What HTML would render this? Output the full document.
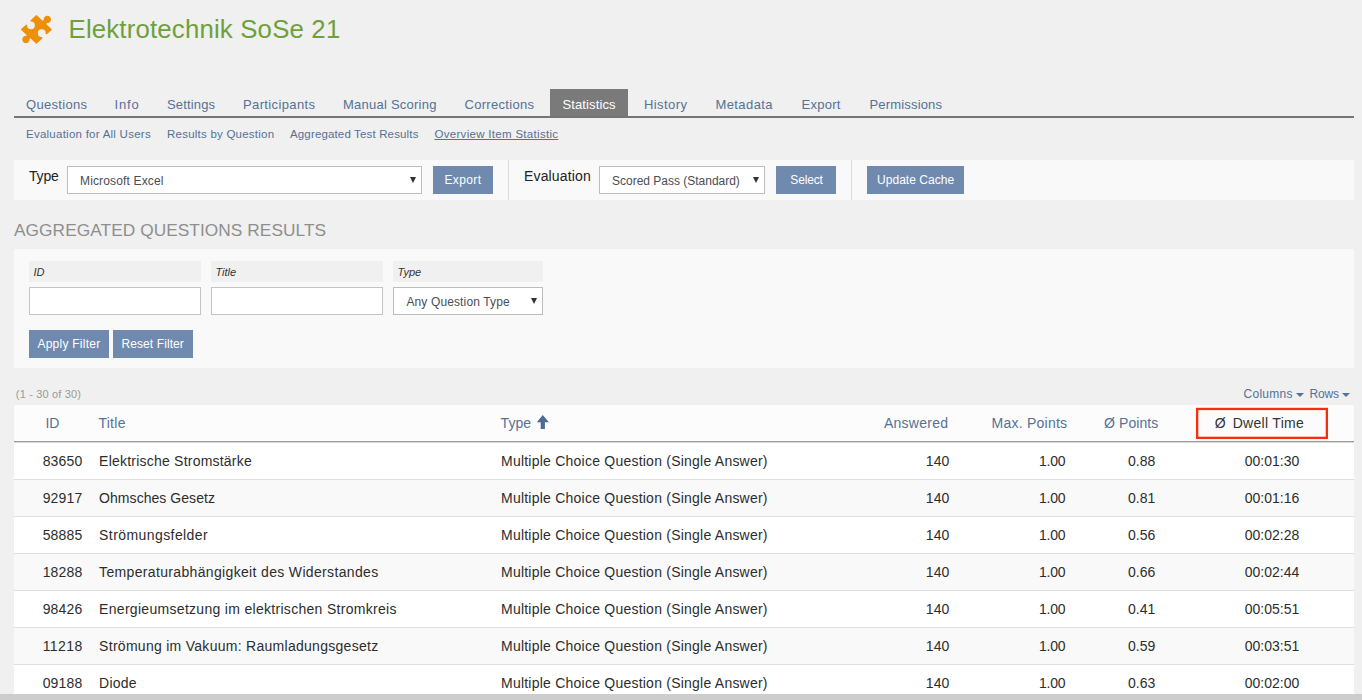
<!DOCTYPE html>
<html lang="en"><head><meta charset="utf-8"><title>Elektrotechnik SoSe 21</title>
<style>
*{box-sizing:border-box}
html,body{margin:0;padding:0}
body{width:1362px;height:700px;overflow:hidden;background:#f0f0f0;position:relative;
 font-family:"Liberation Sans",sans-serif;font-size:14px;color:#2d2d2d;line-height:1}
a{color:#557196;text-decoration:none}
#hdr{position:absolute;left:0;top:0;width:1362px;height:60px}
#hdr svg{position:absolute;left:18px;top:13px}
#hdr h1{position:absolute;left:68.5px;top:17px;margin:0;font-weight:normal;font-size:25.8px;color:#6ea03c;white-space:nowrap}
#tabs{position:absolute;left:14px;top:89px;width:1340px;height:29px;margin:0;padding:0;list-style:none;border-bottom:2px solid #757575}
#tabs li{position:absolute;top:0;height:27px;font-size:13px;white-space:nowrap}
#tabs li a{display:block;height:27px;padding:9px 0 0 12px}
#tabs li.act{background:#7a7a7a}
#tabs li.act a{color:#fff}
#subtabs{position:absolute;left:14px;top:118px;width:1340px;height:32px;margin:0;padding:0;list-style:none}
#subtabs li{position:absolute;top:11px;font-size:11.5px;white-space:nowrap}
#subtabs li.act a{text-decoration:underline}
#toolbar{position:absolute;left:14px;top:160px;width:1340px;height:40px;background:#f9f9f9}
#toolbar label{position:absolute;font-size:14px;color:#222;top:8.5px;white-space:nowrap}
.sel{position:absolute;height:28px;background:#fff;border:1px solid #bdbdbd;font-size:12px;color:#4a4d55;white-space:nowrap;padding:7.5px 0 0 12px}
.sel i{position:absolute;right:5px;top:10px;width:0;height:0;border-left:3.5px solid transparent;border-right:3.5px solid transparent;border-top:6.5px solid #333}
.btn{position:absolute;height:28px;background:#6f8aae;color:#fff;font-size:12px;text-align:left;padding:0;white-space:nowrap;border:0;font-family:inherit;line-height:1;margin:0}
.vsep{position:absolute;top:0;width:1px;height:40px;background:#dcdcdc}
h3{position:absolute;left:14px;top:221.5px;margin:0;font-weight:normal;font-size:17.3px;color:#8e8e8e;white-space:nowrap}
#filter{position:absolute;left:14px;top:249px;width:1340px;height:119px;background:#f9f9f9}
#filter .lab{position:absolute;top:12px;height:21px;background:#f0f0f0;font-size:11px;font-style:italic;color:#333;padding:6px 0 0 4.5px}
#filter .inp{position:absolute;top:38px;height:28px;background:#fff;border:1px solid #c4c4c4}
#filter .sel{top:38px;height:28px;padding-top:7.5px}
#filter .btn{top:81px}
#nav{position:absolute;left:14px;top:380px;width:1340px;height:25px;font-size:11px;color:#999}
#nav .cnt{position:absolute;left:1.8px;top:8.5px;white-space:nowrap}
#nav .r{position:absolute;top:8px;font-size:12px;white-space:nowrap}
#nav .r i{display:inline-block;width:0;height:0;border-left:4px solid transparent;border-right:4px solid transparent;border-top:4.5px solid #557196;margin-left:3.5px;vertical-align:1.5px;letter-spacing:0}
table{position:absolute;left:14px;top:405px;width:1340px;border-collapse:separate;border-spacing:0;table-layout:fixed;font-size:14px}
th{height:37px;background:#fcfcfc;font-weight:normal;color:#557196;border-bottom:1px solid #9c9c9c;padding:0;white-space:nowrap;vertical-align:middle;text-align:left}
td{height:37px;border-bottom:1px solid #dedede;padding:0;white-space:nowrap;vertical-align:middle;text-align:left;background:#fff}
tr.odd td{background:#f9f9f9}
tbody tr:first-child td{height:38px;border-top:1px solid #dadada}
td span,th span,th a{display:inline-block}
#red{position:absolute;left:1194px;top:406px;width:136px;height:35px;overflow:visible}
#bar{position:absolute;left:0;top:694px;width:1362px;height:6px;background:#cdcdcd}
.up{position:absolute;left:523px;top:10px}
.mc{letter-spacing:0.23px}
</style></head>
<body>
<div id="hdr">
<svg width="36" height="32" viewBox="-18 -16 36 32"><g transform="translate(0.4,0.45) rotate(45)"><path fill="#ee9007" stroke="#ee9007" stroke-width="1.2" stroke-linejoin="round" d="M-9.65 -9.65 L-1.00 -9.99 L-1.09 -12.27 A3.10 3.10 0 1 1 2.51 -12.41 L2.60 -10.14 L10.45 -10.45 L10.20 -4.20 L9.67 -4.22 A4.50 4.50 0 1 0 9.41 2.18 L9.95 2.20 L9.65 9.65 L1.30 9.98 L1.37 11.86 A3.10 3.10 0 1 1 -2.22 12.00 L-2.30 10.13 L-10.45 10.45 L-10.20 4.10 L-9.96 4.11 A4.50 4.50 0 1 0 -9.71 -2.29 L-9.94 -2.30 L-9.65 -9.65 Z"/></g></svg>
<h1 style="letter-spacing:0.17px">Elektrotechnik SoSe 21</h1>
</div>
<ul id="tabs">
<li style="left:0.0px;width:85.0px"><a style="padding-left:12.0px;letter-spacing:0.31px">Questions</a></li>
<li style="left:88.6px;width:48.1px"><a style="padding-left:12.0px;letter-spacing:0.80px">Info</a></li>
<li style="left:141.0px;width:72.0px"><a style="padding-left:12.0px;letter-spacing:0.15px">Settings</a></li>
<li style="left:217.0px;width:96.0px"><a style="padding-left:12.0px;letter-spacing:0.37px">Participants</a></li>
<li style="left:317.0px;width:117.5px"><a style="padding-left:12.0px;letter-spacing:0.24px">Manual Scoring</a></li>
<li style="left:438.5px;width:93.5px"><a style="padding-left:12.0px;letter-spacing:0.30px">Corrections</a></li>
<li class="act" style="left:536.0px;width:78.0px"><a style="padding-left:12.5px;letter-spacing:0.11px">Statistics</a></li>
<li style="left:618.0px;width:67.0px"><a style="padding-left:12.0px;letter-spacing:0.42px">History</a></li>
<li style="left:689.5px;width:81.0px"><a style="padding-left:12.0px;letter-spacing:0.40px">Metadata</a></li>
<li style="left:775.5px;width:63.0px"><a style="padding-left:12.0px;letter-spacing:0.28px">Export</a></li>
<li style="left:843.5px;width:96.5px"><a style="padding-left:12.0px;letter-spacing:0.17px">Permissions</a></li>
</ul>
<ul id="subtabs">
<li style="left:12.0px"><a style="letter-spacing:0.25px">Evaluation for All Users</a></li>
<li style="left:153.0px"><a style="letter-spacing:0.23px">Results by Question</a></li>
<li style="left:276.0px"><a style="letter-spacing:0.15px">Aggregated Test Results</a></li>
<li class="act" style="left:420.5px"><a style="letter-spacing:0.30px">Overview Item Statistic</a></li>
</ul>
<div id="toolbar">
<label style="left:15px;letter-spacing:-0.19px">Type</label>
<div class="sel" style="left:53px;top:6px;width:355px;letter-spacing:0.15px">Microsoft Excel<i></i></div>
<button class="btn" style="left:419px;width:60px;padding-left:11.5px;letter-spacing:0.36px;top:6px">Export</button>
<div class="vsep" style="left:494px"></div>
<label style="left:510px;letter-spacing:0.16px">Evaluation</label>
<div class="sel" style="left:585px;top:6px;width:166px;letter-spacing:-0.01px">Scored Pass (Standard)<i></i></div>
<button class="btn" style="left:762px;width:60px;padding-left:14.3px;letter-spacing:-0.15px;top:6px">Select</button>
<div class="vsep" style="left:837px"></div>
<button class="btn" style="left:853px;width:97px;padding-left:10.0px;letter-spacing:0.04px;top:6px">Update Cache</button>
</div>
<h3 style="letter-spacing:0.06px">AGGREGATED QUESTIONS RESULTS</h3>
<div id="filter">
<div class="lab" style="left:15px;width:172px">ID</div>
<div class="lab" style="left:197px;width:172px">Title</div>
<div class="lab" style="left:379px;width:150px">Type</div>
<div class="inp" style="left:15px;width:172px"></div>
<div class="inp" style="left:197px;width:172px"></div>
<div class="sel" style="left:379px;width:150px;padding-left:12.4px;letter-spacing:0.13px">Any Question Type<i></i></div>
<button class="btn" style="left:15px;width:80px;padding-left:8.4px;letter-spacing:0.25px;">Apply Filter</button>
<button class="btn" style="left:99px;width:80px;padding-left:8.5px;letter-spacing:0.09px;">Reset Filter</button>
</div>
<div id="nav"><span class="cnt" style="letter-spacing:0.17px">(1 - 30 of 30)</span>
<a class="r" style="left:1229.5px;letter-spacing:0.27px">Columns<i></i></a>
<a class="r" style="left:1295.5px;letter-spacing:-0.20px">Rows<i></i></a>
</div>
<table>
<colgroup><col style="width:85px"><col style="width:402px"><col style="width:360px"><col style="width:101px"><col style="width:119px"><col style="width:91px"><col style="width:182px"></colgroup>
<thead><tr>
<th><span style="margin-left:31.4px;letter-spacing:-0.10px">ID</span></th>
<th><a style="margin-left:-0.6px;letter-spacing:0.27px">Title</a></th>
<th style="position:relative"><a style="margin-left:-0.4px;letter-spacing:0.05px">Type</a><svg class="up" style="left:36px" width="12" height="14" viewBox="0 0 12 14"><path fill="#4c6a92" d="M5.8 0 L11.9 7.3 L7.9 7.3 L7.9 14 L3.7 14 L3.7 7.3 L-0.3 7.3 Z"/></svg></th>
<th><a style="margin-left:22.9px;letter-spacing:0.28px">Answered</a></th>
<th><a style="margin-left:29.5px;letter-spacing:0.24px">Max. Points</a></th>
<th><a style="margin-left:23.0px;letter-spacing:0.09px">Ø Points</a></th>
<th style="color:#333"><span style="margin-left:42.8px;letter-spacing:0.00px">Ø</span><span style="margin-left:7.0px;letter-spacing:0.30px">Dwell Time</span></th>
</tr></thead>
<tbody>
<tr><td><span style="margin-left:28.7px;letter-spacing:0.14px">83650</span></td><td><span style="margin-left:0.1px;letter-spacing:0.22px">Elektrische Stromstärke</span></td><td><span class="mc">Multiple Choice Question (Single Answer)</span></td><td><span style="margin-left:64.8px;letter-spacing:0.12px">140</span></td><td><span style="margin-left:77.0px;letter-spacing:-0.20px">1.00</span></td><td><span style="margin-left:47.0px;letter-spacing:0.02px">0.88</span></td><td><span style="margin-left:72.8px;letter-spacing:0.00px">00:01:30</span></td></tr>
<tr class="odd"><td><span style="margin-left:28.7px;letter-spacing:0.14px">92917</span></td><td><span style="margin-left:0.1px;letter-spacing:0.05px">Ohmsches Gesetz</span></td><td><span class="mc">Multiple Choice Question (Single Answer)</span></td><td><span style="margin-left:64.8px;letter-spacing:0.12px">140</span></td><td><span style="margin-left:77.0px;letter-spacing:-0.20px">1.00</span></td><td><span style="margin-left:47.0px;letter-spacing:0.02px">0.81</span></td><td><span style="margin-left:72.8px;letter-spacing:0.00px">00:01:16</span></td></tr>
<tr><td><span style="margin-left:28.7px;letter-spacing:0.14px">58885</span></td><td><span style="margin-left:0.1px;letter-spacing:0.42px">Strömungsfelder</span></td><td><span class="mc">Multiple Choice Question (Single Answer)</span></td><td><span style="margin-left:64.8px;letter-spacing:0.12px">140</span></td><td><span style="margin-left:77.0px;letter-spacing:-0.20px">1.00</span></td><td><span style="margin-left:47.0px;letter-spacing:0.02px">0.56</span></td><td><span style="margin-left:72.8px;letter-spacing:0.00px">00:02:28</span></td></tr>
<tr class="odd"><td><span style="margin-left:28.7px;letter-spacing:0.14px">18288</span></td><td><span style="margin-left:0.1px;letter-spacing:0.34px">Temperaturabhängigkeit des Widerstandes</span></td><td><span class="mc">Multiple Choice Question (Single Answer)</span></td><td><span style="margin-left:64.8px;letter-spacing:0.12px">140</span></td><td><span style="margin-left:77.0px;letter-spacing:-0.20px">1.00</span></td><td><span style="margin-left:47.0px;letter-spacing:0.02px">0.66</span></td><td><span style="margin-left:72.8px;letter-spacing:0.00px">00:02:44</span></td></tr>
<tr><td><span style="margin-left:28.7px;letter-spacing:0.14px">98426</span></td><td><span style="margin-left:0.1px;letter-spacing:0.30px">Energieumsetzung im elektrischen Stromkreis</span></td><td><span class="mc">Multiple Choice Question (Single Answer)</span></td><td><span style="margin-left:64.8px;letter-spacing:0.12px">140</span></td><td><span style="margin-left:77.0px;letter-spacing:-0.20px">1.00</span></td><td><span style="margin-left:47.0px;letter-spacing:0.02px">0.41</span></td><td><span style="margin-left:72.8px;letter-spacing:0.00px">00:05:51</span></td></tr>
<tr class="odd"><td><span style="margin-left:28.7px;letter-spacing:0.40px">11218</span></td><td><span style="margin-left:0.1px;letter-spacing:0.28px">Strömung im Vakuum: Raumladungsgesetz</span></td><td><span class="mc">Multiple Choice Question (Single Answer)</span></td><td><span style="margin-left:64.8px;letter-spacing:0.12px">140</span></td><td><span style="margin-left:77.0px;letter-spacing:-0.20px">1.00</span></td><td><span style="margin-left:47.0px;letter-spacing:0.02px">0.59</span></td><td><span style="margin-left:72.8px;letter-spacing:0.00px">00:03:51</span></td></tr>
<tr><td><span style="margin-left:28.7px;letter-spacing:0.14px">09188</span></td><td><span style="margin-left:0.1px;letter-spacing:0.23px">Diode</span></td><td><span class="mc">Multiple Choice Question (Single Answer)</span></td><td><span style="margin-left:64.8px;letter-spacing:0.12px">140</span></td><td><span style="margin-left:77.0px;letter-spacing:-0.20px">1.00</span></td><td><span style="margin-left:47.0px;letter-spacing:0.02px">0.63</span></td><td><span style="margin-left:72.8px;letter-spacing:0.00px">00:02:00</span></td></tr>
</tbody></table>
<svg id="red" width="136" height="35" viewBox="0 0 136 35"><rect x="3.15" y="2.95" width="129.7" height="28.9" fill="none" stroke="#fa2d0a" stroke-width="2.3"/></svg>
<div id="bar"></div>
</body></html>
